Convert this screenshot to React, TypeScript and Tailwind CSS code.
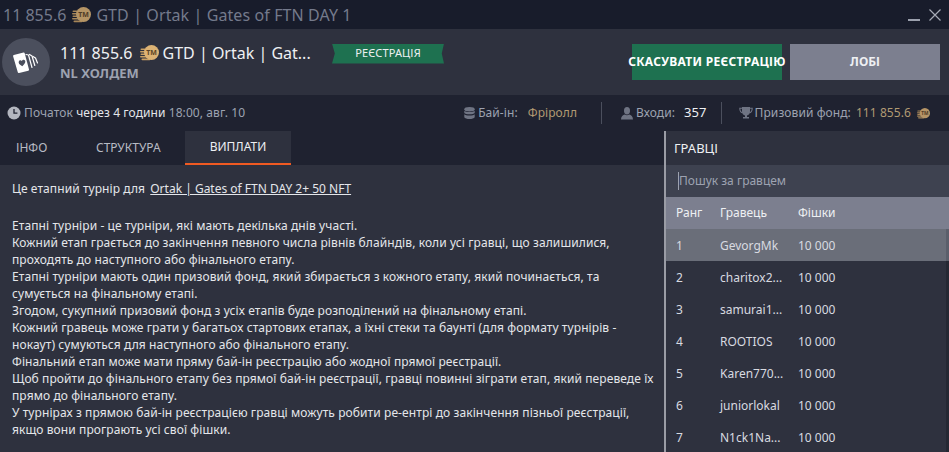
import React from "react";

function Coin({ size = 19, dim = false }: { size?: number; dim?: boolean }) {
  return (
    <svg width={size} height={Math.round((size * 16) / 19)} viewBox="0 0 19 16" className={dim ? "shrink-0 opacity-80" : "shrink-0"}>
      <g fill="#c9a064">
        <rect x="0.5" y="3.5" width="8" height="1.6" rx="0.8" />
        <rect x="0" y="6" width="8" height="1.6" rx="0.8" />
        <rect x="0.5" y="8.5" width="8" height="1.6" rx="0.8" />
        <rect x="0" y="11" width="8" height="1.6" rx="0.8" />
        <rect x="1.5" y="13.4" width="9" height="1.8" rx="0.9" />
      </g>
      <circle cx="11.5" cy="7.5" r="7.5" fill="#dcb274" />
      <text x="11.5" y="10" textAnchor="middle" fontSize="7" fontWeight="700" fontFamily="'Noto Sans', sans-serif" fill="#5c4526">TM</text>
    </svg>
  );
}

function CardsIcon() {
  return (
    <svg width="28" height="26" viewBox="0 0 28 26">
      <g fill="none" stroke="#ffffff" strokeWidth="1.2" strokeLinecap="round" strokeLinejoin="round">
        <path d="M14 5.500 L16.500 6 L20 18.500" />
        <path d="M17.500 5.500 L20 7 L22.800 16.500" />
        <path d="M21 7.500 L23.500 9 L25.500 14" />
      </g>
      <path d="M1.800 6 L11.500 3.600 a1 1 0 0 1 1.200 .7 L17 20.500 a1 1 0 0 1 -.7 1.200 L7 24 a1 1 0 0 1 -1.200 -.7 L1.100 7.200 a1 1 0 0 1 .7 -1.200z" fill="#ffffff" />
      <path d="M10.300 17.200 C7.500 15.600 6.200 14.200 6.800 12.500 C7.300 11.200 9 10.900 9.900 12.100 C10.400 10.800 12.100 10.400 13 11.500 C14 13 12.800 15 10.300 17.200z" fill="#4b4f5d" />
    </svg>
  );
}

const lines = [
  "Етапні турніри - це турніри, які мають декілька днів участі.",
  "Кожний етап грається до закінчення певного числа рівнів блайндів, коли усі гравці, що залишилися,",
  "проходять до наступного або фінального етапу.",
  "Етапні турніри мають один призовий фонд, який збирається з кожного етапу, який починається, та",
  "сумується на фінальному етапі.",
  "Згодом, сукупний призовий фонд з усіх етапів буде розподілений на фінальному етапі.",
  "Кожний гравець може грати у багатьох стартових етапах, а їхні стеки та баунті (для формату турнірів -",
  "нокаут) сумуються для наступного або фінального етапу.",
  "Фінальний етап може мати пряму бай-ін реєстрацію або жодної прямої реєстрації.",
  "Щоб пройти до фінального етапу без прямої бай-ін реєстрації, гравці повинні зіграти етап, який переведе їх",
  "прямо до фінального етапу.",
  "У турнірах з прямою бай-ін реєстрацією гравці можуть робити ре-ентрі до закінчення пізньої реєстрації,",
  "якщо вони програють усі свої фішки.",
];

const players = [
  ["1", "GevorgMk"],
  ["2", "charitox2..."],
  ["3", "samurai1..."],
  ["4", "ROOTIOS"],
  ["5", "Karen770..."],
  ["6", "juniorlokal"],
  ["7", "N1ck1Na..."],
];

export default function App() {
  return (
    <div className="w-[949px] h-[452px] overflow-hidden flex flex-col bg-[#2e313e] font-['Noto_Sans',sans-serif] text-[#e4e6ea]">
      {/* title bar */}
      <div className="h-[29px] shrink-0 bg-[#181c2b] flex items-center justify-between overflow-hidden">
        <div className="flex items-center ml-[3px] text-[16px] text-[#747a8c] whitespace-nowrap">
          <span>11 855.6</span>
          <span className="ml-[6px] mr-[5px]"><Coin dim /></span>
          <span className="tracking-[0.1px]">GTD | Ortak | Gates of FTN DAY 1</span>
        </div>
        <div className="flex items-center gap-[9px] pr-[8px]">
          <div className="w-[12px] h-[2px] bg-[#9ba0ad] mt-[10px]" />
          <svg width="12" height="12" viewBox="0 0 12 12" stroke="#a6abb6" strokeWidth="1.2" fill="none"><path d="M.5.5 11.500 11.500M11.500.5.500 11.500" /></svg>
        </div>
      </div>

      {/* header */}
      <div className="h-[66px] shrink-0 bg-[#2e313e] flex items-center pl-[2px] pr-[9px]">
        <div className="w-[48px] h-[48px] rounded-full bg-[#4b4f5d] flex items-center justify-center shrink-0">
          <CardsIcon />
        </div>
        <div className="ml-[10px] w-[258px] shrink-0 mt-[-1px]">
          <div className="flex items-center text-[16px] leading-[22px] text-[#eef0f3] whitespace-nowrap">
            <span>111 855.6</span>
            <span className="ml-[7px] mr-[4px]"><Coin /></span>
            <span>GTD | Ortak | Gat...</span>
          </div>
          <div className="text-[13px] leading-[18px] font-bold text-[#9da2b0]">NL ХОЛДЕМ</div>
        </div>
        <div
          className="ml-[14px] mt-[-17px] w-[112px] h-[20px] bg-[#1e7150] flex items-center justify-center text-[11px] tracking-[0.15px] text-[#eef0f3]"
          style={{ clipPath: "polygon(0 0,100% 0,98% 50%,100% 100%,0 100%,2.5% 50%)" }}
        >
          РЕЄСТРАЦІЯ
        </div>
        <div className="ml-auto flex gap-[8px]">
          <button className="w-[150px] h-[36px] bg-[#1e7150] text-[12px] font-bold text-white whitespace-nowrap flex items-center justify-center overflow-visible tracking-[0.3px]">
            СКАСУВАТИ РЕЄСТРАЦІЮ
          </button>
          <button className="w-[150px] h-[36px] bg-[#7c7f8f] text-[12px] font-bold text-[#eef0f3]">ЛОБІ</button>
        </div>
      </div>

      {/* info row */}
      <div className="h-[36px] shrink-0 bg-[#1f2230] flex items-center text-[12px] tracking-[0.08px] text-[#9da2b0] whitespace-nowrap">
        <div className="flex items-center ml-[7px]">
          <svg width="14" height="14" viewBox="0 0 14 14" className="shrink-0">
            <circle cx="7" cy="7" r="6.500" fill="#b3b6bf" />
            <path d="M7 3v4.200h3.400" fill="none" stroke="#1f2230" strokeWidth="1.300" />
          </svg>
          <span className="ml-[3px]">Початок <span className="text-[#e4e6ea]">через 4 години</span> 18:00, авг. 10</span>
        </div>
        <div className="ml-auto flex items-center h-[22px]">
          <svg width="11" height="13" viewBox="0 0 11 13" fill="#6f7483" className="shrink-0">
            <ellipse cx="5.500" cy="2.300" rx="5.200" ry="2.200" />
            <path d="M.3 3.800c1 1.600 9.400 1.600 10.400 0v2.200c-1 1.800-9.400 1.800-10.400 0zM.3 7.300c1 1.600 9.400 1.600 10.400 0v2.900c-1 2.400-9.400 2.400-10.400 0z" />
          </svg>
          <span className="ml-[3px]">Бай-ін:</span>
          <span className="ml-[10px] text-[#b19a73]">Фріролл</span>
          <div className="ml-[24px] w-px h-[22px] bg-[#4b4f5d]" />
          <svg width="12" height="13" viewBox="0 0 12 13" fill="#6f7483" className="ml-[19px] shrink-0">
            <ellipse cx="6" cy="3.800" rx="3" ry="3.700" />
            <path d="M0 12.500c0-3 2-4.300 3.800-4.900 1.300.8 3.100.8 4.400 0 1.800.6 3.800 1.900 3.800 4.900z" />
          </svg>
          <span className="ml-[3px]">Входи:</span>
          <span className="ml-[9px] text-[#eef0f3] text-[13px]">357</span>
          <div className="ml-[14px] w-px h-[22px] bg-[#4b4f5d]" />
          <svg width="14" height="13" viewBox="0 0 14 13" className="ml-[17px] shrink-0">
            <path d="M3 0h8v4.500c0 2.300-1.500 3.500-3 3.900V10h2v1.500H4V10h2V8.400C4.500 8 3 6.800 3 4.500z" fill="#6f7483" />
            <path d="M3 1.200H.8c0 3 1 4.300 3 4.600M11 1.200h2.200c0 3-1 4.300-3 4.600" fill="none" stroke="#6f7483" strokeWidth="1.100" />
          </svg>
          <span className="ml-[2px]">Призовий фонд:</span>
          <span className="ml-[5px] text-[#b19a73]">111 855.6</span>
          <span className="ml-[6px] mr-[19px]"><Coin size={13} dim /></span>
        </div>
      </div>

      {/* main */}
      <div className="flex-1 flex min-h-0">
        <div className="w-[664px] shrink-0 flex flex-col bg-[#2e313e]">
          <div className="h-[34px] shrink-0 bg-[#1f2230] flex text-[12px] text-[#b8bbc4]">
            <div className="w-[50px] pl-[16px] flex items-center">ІНФО</div>
            <div className="ml-[46px] w-[65px] flex items-center">СТРУКТУРА</div>
            <div className="ml-[24px] w-[106px] bg-[#2e313e] border-b-2 border-[#f05a22] text-[#eef0f3] flex items-center justify-center">ВИПЛАТИ</div>
          </div>
          <div className="pl-[12px] pt-[15px] text-[12px] leading-[17px] text-[#e4e6ea] whitespace-nowrap">
            <div>
              <span className="tracking-[0.08px]">Це етапний турнір для</span> <span className="ml-[2px] underline">Ortak | Gates of FTN DAY 2+ 50 NFT</span>
            </div>
            <div className="h-[20px]" />
            {lines.map((p) => (
              <div key={p} className="tracking-[0.09px]">{p}</div>
            ))}
          </div>
        </div>

        <div className="w-[2px] shrink-0 bg-[#9a9ca5]" />

        <div className="flex-1 flex flex-col bg-[#2e313e] min-w-0">
          <div className="h-[34px] shrink-0 flex items-center pl-[8px] pt-[1px] text-[13px] text-[#eef0f3]">ГРАВЦІ</div>
          <div className="h-[32px] shrink-0 bg-[#3e4250] flex items-center pl-[12px] text-[12px] text-[#9da2b0]">
            <span className="border-l border-[#9da2b0]">Пошук за гравцем</span>
          </div>
          <div className="h-[32px] shrink-0 bg-[#7c7f8f] flex items-center text-[12px] text-[#eef0f3]">
            <div className="w-[54px] pl-[10px]">Ранг</div>
            <div className="w-[78px]">Гравець</div>
            <div>Фішки</div>
          </div>
          <div className="flex-1 min-h-0 overflow-hidden flex">
            <div className="flex-1 min-w-0">
              {players.map(([rank, name]) => (
                <div
                  key={rank}
                  className={`h-[32px] pt-[1px] flex items-center text-[12px] text-[#d8dae0] ${rank === "1" ? "bg-[#6a6e79]" : ""}`}
                >
                  <div className="w-[54px] pl-[10px]">{rank}</div>
                  <div className="w-[78px] whitespace-nowrap">{name}</div>
                  <div>10 000</div>
                </div>
              ))}
            </div>
            <div className="w-[3px] shrink-0 bg-[#252833]">
              <div className="h-[32px] bg-[#5b5f6b]" />
            </div>
          </div>
        </div>
      </div>
    </div>
  );
}
